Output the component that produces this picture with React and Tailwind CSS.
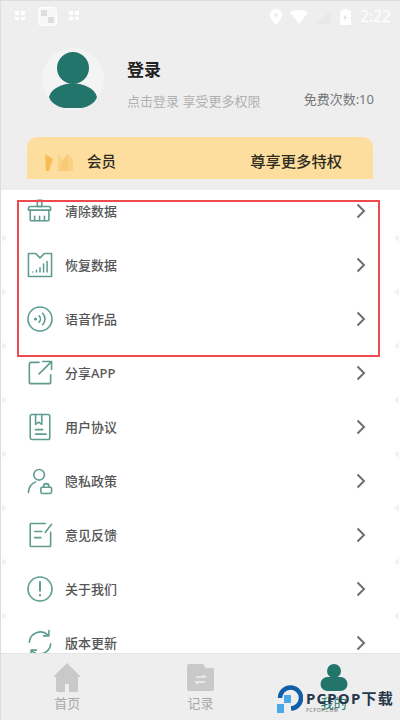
import React from 'react';

const stroke = '#5f9c90';

const BroomIcon = () => (
  <svg width="32" height="32" viewBox="0 0 36 36" fill="none" stroke={stroke} strokeWidth="1.8" strokeLinecap="round" strokeLinejoin="round">
    <path d="M15 6h5v7h-5z" />
    <path d="M7 13h21a2 2 0 0 1 2 2v2H5v-2a2 2 0 0 1 2-2z" />
    <path d="M7 17v11a1 1 0 0 0 1 1h19a1 1 0 0 0 1-1V17" />
    <path d="M12 24v5M17.500 24v5M23 24v5" />
  </svg>
);

const ChartIcon = () => (
  <svg width="32" height="32" viewBox="0 0 36 36" fill="none" stroke={stroke} strokeWidth="1.8" strokeLinecap="round" strokeLinejoin="round">
    <path d="M5 5h8l5 5 5-5h8v26H5z" />
    <path d="M10 26v0M14 24v2M18 21v5M22 17v9M26 14v12" strokeWidth="1.7" />
  </svg>
);

const VoiceIcon = () => (
  <svg width="32" height="32" viewBox="0 0 36 36" fill="none" stroke={stroke} strokeWidth="1.8" strokeLinecap="round">
    <circle cx="18" cy="18" r="13.500" />
    <circle cx="13" cy="18" r="0.900" fill={stroke} />
    <path d="M17 14.500a5 5 0 0 1 0 7" />
    <path d="M21 11.500a9.500 9.500 0 0 1 0 13" />
  </svg>
);

const ShareIcon = () => (
  <svg width="32" height="32" viewBox="0 0 36 36" fill="none" stroke={stroke} strokeWidth="1.8" strokeLinecap="round" strokeLinejoin="round">
    <path d="M17 6H8a2 2 0 0 0-2 2v20a2 2 0 0 0 2 2h20a2 2 0 0 0 2-2v-8" />
    <path d="M17 19L30 6M21 5h10v9" />
  </svg>
);

const AgreementIcon = () => (
  <svg width="32" height="32" viewBox="0 0 36 36" fill="none" stroke={stroke} strokeWidth="1.8" strokeLinecap="round" strokeLinejoin="round">
    <rect x="7" y="4" width="22" height="28" rx="2" />
    <path d="M13 4v11l3.500-2.500L20 15V4" />
    <path d="M13 21h8M13 26h12" />
  </svg>
);

const PrivacyIcon = () => (
  <svg width="32" height="32" viewBox="0 0 36 36" fill="none" stroke={stroke} strokeWidth="1.8" strokeLinecap="round" strokeLinejoin="round">
    <circle cx="17" cy="11" r="6" />
    <path d="M5 31c0-6 3.500-10 8-12" />
    <rect x="19" y="25" width="12" height="7" rx="1.500" />
    <path d="M22 25v-1a3 3 0 0 1 6 0v1" />
  </svg>
);

const FeedbackIcon = () => (
  <svg width="32" height="32" viewBox="0 0 36 36" fill="none" stroke={stroke} strokeWidth="1.8" strokeLinecap="round" strokeLinejoin="round">
    <path d="M24 5H8a1 1 0 0 0-1 1v24a1 1 0 0 0 1 1h21a1 1 0 0 0 1-1V15" />
    <path d="M24 15l7-9" />
    <path d="M12 14h8M12 21h7" />
  </svg>
);

const AboutIcon = () => (
  <svg width="32" height="32" viewBox="0 0 36 36" fill="none" stroke={stroke} strokeWidth="1.8" strokeLinecap="round">
    <circle cx="18" cy="18" r="13.500" />
    <path d="M18 10v10" strokeWidth="2.200" />
    <circle cx="18" cy="25" r="1.300" fill={stroke} stroke="none" />
  </svg>
);

const UpdateIcon = () => (
  <svg width="32" height="32" viewBox="0 0 36 36" fill="none" stroke={stroke} strokeWidth="1.8" strokeLinecap="round" strokeLinejoin="round">
    <path d="M6 17a12.500 12.500 0 0 1 21-8" />
    <path d="M30 19a12.500 12.500 0 0 1-21 8" />
    <path d="M28 4v6h-6" />
    <path d="M8 32v-6h6" />
  </svg>
);

const rows = [
  { title: '清除数据', icon: <BroomIcon /> },
  { title: '恢复数据', icon: <ChartIcon /> },
  { title: '语音作品', icon: <VoiceIcon /> },
  { title: '分享APP', icon: <ShareIcon /> },
  { title: '用户协议', icon: <AgreementIcon /> },
  { title: '隐私政策', icon: <PrivacyIcon /> },
  { title: '意见反馈', icon: <FeedbackIcon /> },
  { title: '关于我们', icon: <AboutIcon /> },
  { title: '版本更新', icon: <UpdateIcon /> },
];

const Chevron = () => (
  <svg width="12" height="16" viewBox="0 0 12 16" fill="none" stroke="#6f6f6f" strokeWidth="2">
    <path d="M2.500 1.500L9 8l-6.500 6.500" />
  </svg>
);

const MenuRow = ({ title, icon }) => (
  <div className="relative flex h-[54px] shrink-0 items-center pl-[23px] pr-[33px]">
    <div className="flex w-[41px] shrink-0 items-center">{icon}</div>
    <span className="mt-[2px] flex-1 text-[13px] font-medium text-[#555555]">{title}</span>
    <Chevron />
    <span className="absolute -bottom-[4px] left-[1px] h-0 w-0 border-y-[4px] border-l-[5px] border-y-transparent border-l-[#f2f2f2]" />
    <span className="absolute -bottom-[4px] right-[1px] h-0 w-0 border-y-[4px] border-r-[5px] border-y-transparent border-r-[#f2f2f2]" />
  </div>
);

const StatusBar = () => (
  <div className="flex h-[30px] shrink-0 items-center justify-between pl-[14px] pr-[9px] pt-[1px]">
    <div className="flex items-center gap-[12px]">
      <svg width="11" height="11" viewBox="0 0 11 11" fill="#ffffff"><rect x="0" y="0" width="4" height="4" /><rect x="6" y="0" width="4" height="4" /><rect x="0" y="6" width="4" height="3" /><rect x="6" y="6" width="4" height="3" /></svg>
      <svg width="19" height="19" viewBox="0 0 19 19" fill="none"><rect x="0.500" y="0.500" width="18" height="18" rx="3" fill="#f7f7f7" stroke="#ffffff" /><rect x="3" y="3" width="6" height="6" fill="#dddddd" /><rect x="10" y="10" width="6" height="6" fill="#dddddd" /></svg>
      <svg width="11" height="11" viewBox="0 0 11 11" fill="#ffffff"><rect x="0" y="0" width="4" height="4" /><rect x="6" y="0" width="4" height="4" /><rect x="0" y="6" width="4" height="3" /><rect x="6" y="6" width="4" height="3" /></svg>
    </div>
    <div className="flex items-center">
      <svg width="12" height="16" viewBox="0 0 12 16" fill="#ffffff" className="mr-[8px]"><path fillRule="evenodd" d="M6 0a6 6 0 0 1 6 6c0 4-6 10-6 10S0 10 0 6a6 6 0 0 1 6-6zm0 4a2 2 0 1 0 0 4 2 2 0 0 0 0-4z" /></svg>
      <svg width="18" height="14" viewBox="0 0 18 14" fill="#ffffff" className="mr-[8px]"><path d="M0 2.500C5-1 13-1 18 2.500L9 14z" /></svg>
      <svg width="15" height="14" viewBox="0 0 15 14" fill="#e9e9e9" className="mr-[9px]"><path d="M0 14L15 0v14z" /></svg>
      <svg width="11" height="16" viewBox="0 0 11 16" className="mr-[9px]"><path fill="#ffffff" d="M3 0h5v1.500h2a1 1 0 0 1 1 1V15a1 1 0 0 1-1 1H1a1 1 0 0 1-1-1V2.500a1 1 0 0 1 1-1h2z" /><path fill="#dddddd" d="M6 5L3 9h2l-1 3 3-4H5z" /></svg>
      <span className="text-[15.500px] leading-none text-white">2:22</span>
    </div>
  </div>
);

const Profile = () => (
  <div className="flex h-[62px] items-center pl-[41px] pr-[26px]">
    <div className="flex h-[62px] w-[62px] shrink-0 items-center justify-center rounded-full bg-[#f4f4f4]">
      <svg width="50" height="58" viewBox="0 0 50 58">
        <circle cx="25" cy="18" r="16" fill="#23756b" />
        <path d="M1 47C6 29 44 29 49 47 44 63 6 63 1 47z" fill="#23756b" />
      </svg>
    </div>
    <div className="ml-[23px] flex h-full flex-1 flex-col">
      <span className="mt-[10px] text-[17px] font-bold leading-[24px] text-[#222222]">登录</span>
      <div className="mt-[10px] flex items-baseline justify-between">
        <span className="text-[13px] leading-[18px] text-[#b0b0b0]">点击登录 享受更多权限</span>
        <span className="-translate-y-[2px] text-[13px] leading-[18px] text-[#777777]">免费次数:10</span>
      </div>
    </div>
  </div>
);

const MemberCard = () => (
  <div className="ml-[26px] mr-[27px] mt-[27px] flex h-[42px] items-center rounded-t-[10px] bg-[#fdde9f] pl-[18px] pr-[31px] pt-[7px]">
    <svg width="28" height="18" viewBox="0 0 28 18" className="shrink-0">
      <path d="M0 1l8 5-4 12H1z" fill="#f8bd52" />
      <path d="M13 1l5 6 5-6 5 5v12H13z" fill="#fbd184" />
      <path d="M18 7l5-6v17h-8z" fill="#f9ca76" />
    </svg>
    <span className="ml-[14px] flex-1 text-[14.500px] font-medium text-[#2e2a20]">会员</span>
    <span className="text-[15.300px] font-medium text-[#2e2a20]">尊享更多特权</span>
  </div>
);

const TabBar = () => (
  <div className="relative flex h-[67px] shrink-0 border-t border-[#e4e4e4] bg-[#eeeeee]">
    <div className="flex w-[133px] flex-col items-center pt-[9px]">
      <svg width="28" height="29" viewBox="0 0 28 29">
        <path fillRule="evenodd" fill="#c9c9c9" d="M14 0l14 14h-3v13a2 2 0 0 1-2 2H5a2 2 0 0 1-2-2V14H0zM12 21v8h4v-8z" />
      </svg>
      <span className="mt-[3px] text-[13px] leading-[16px] text-[#a8a8a8]">首页</span>
    </div>
    <div className="flex w-[134px] flex-col items-center pt-[10px]">
      <svg width="27" height="27" viewBox="0 0 27 27">
        <path fill="#c9c9c9" d="M2 0h14l3 4h6a2 2 0 0 1 2 2v19a2 2 0 0 1-2 2H2a2 2 0 0 1-2-2V2a2 2 0 0 1 2-2z" />
        <path fill="none" stroke="#eeeeee" strokeWidth="1.500" d="M9 13h9l-2-2M18 18H9l2 2" />
      </svg>
      <span className="mt-[4px] text-[13px] leading-[16px] text-[#a8a8a8]">记录</span>
    </div>
    <div className="flex w-[133px] flex-col items-center pt-[10px]">
      <svg width="28" height="27" viewBox="0 0 28 27">
        <circle cx="14" cy="7" r="7" fill="#23756b" />
        <rect x="0.500" y="13" width="27" height="14" rx="7" fill="#23756b" />
      </svg>
      <span className="mt-[4px] text-[13px] leading-[16px] text-[#23756b]">我的</span>
    </div>

    {/* site watermark over the tab bar */}
    <div className="absolute left-[276px] top-[29px] flex items-start">
      <svg width="26" height="30" viewBox="0 0 26 30" fill="none">
        <path d="M3 15a10.500 10.500 0 1 1 11 10.500" stroke="#0f5fa8" strokeWidth="4.500" />
        <rect x="0" y="21" width="7" height="9" fill="#4aa8ea" />
        <rect x="7" y="12" width="7" height="8" fill="#4aa8ea" />
      </svg>
      <div className="ml-[3px] mt-[6px] flex flex-col">
        <span className="whitespace-nowrap text-[15px] font-bold leading-[18px] tracking-[1.200px] text-[#27384a]">PCPOP下载</span>
        <span className="text-[5px] leading-[6px] tracking-[0.500px] text-[#777777]">PCPOP.COM</span>
      </div>
    </div>
  </div>
);

export default function App() {
  return (
    <div
      className="relative flex h-[720px] w-[400px] flex-col overflow-hidden border-l border-t border-[#dddddd] bg-[#eeeeee]"
      style={{ fontFamily: '"Noto Sans", "Noto Sans CJK SC", sans-serif' }}
    >
      <StatusBar />
      <div className="mt-[17px] flex h-[142px] shrink-0 flex-col">
        <Profile />
        <MemberCard />
      </div>
      <div className="flex flex-1 flex-col overflow-hidden bg-white">
        <div className="-mt-[6px] flex flex-col">
          {rows.map((row) => (
            <MenuRow key={row.title} title={row.title} icon={row.icon} />
          ))}
        </div>
      </div>
      <TabBar />

      {/* red highlight drawn on top of the screenshot */}
      <div className="pointer-events-none absolute left-[16px] top-[199px] h-[157px] w-[363px] border-2 border-[#ef4a50]" />
    </div>
  );
}
